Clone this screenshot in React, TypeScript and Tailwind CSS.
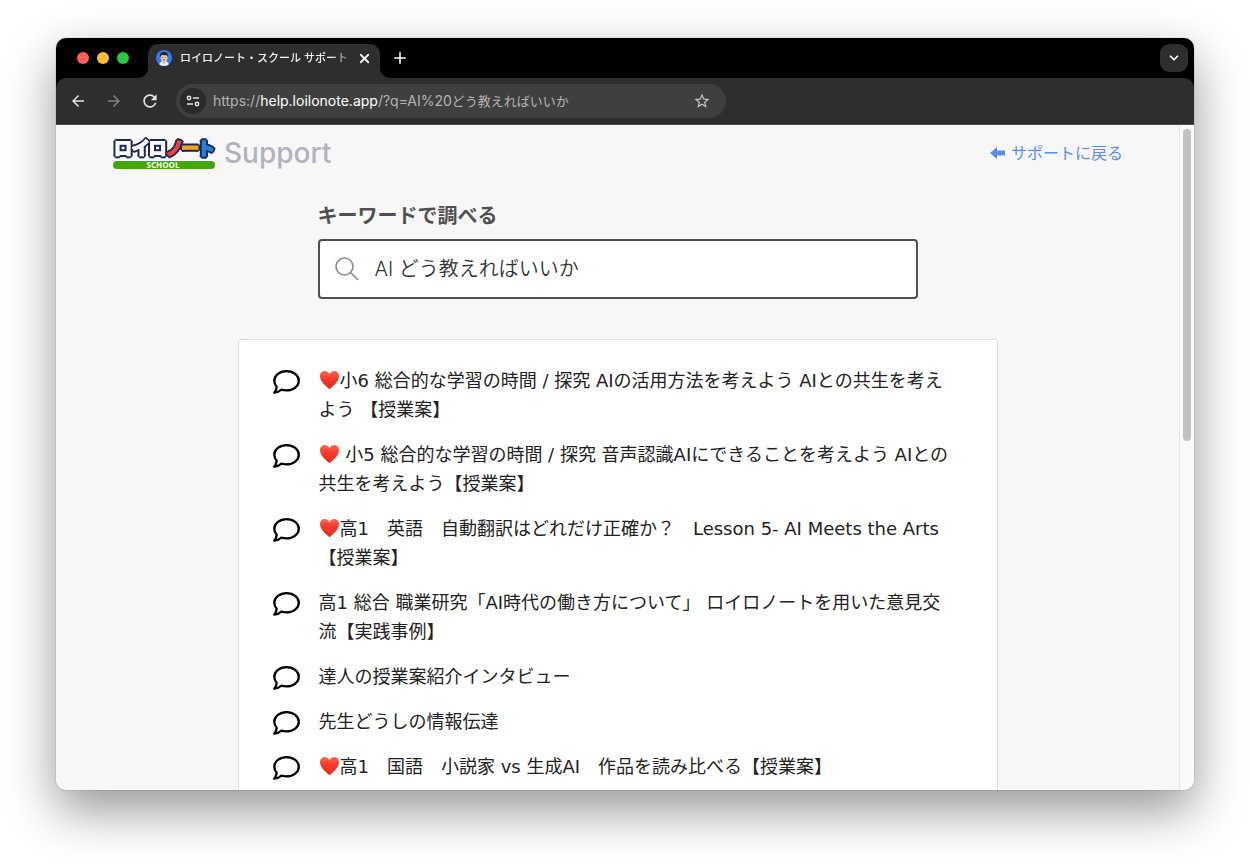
import { LuChevronDown, LuPlus, LuX } from "react-icons/lu"
import { MdArrowBack, MdArrowForward, MdRefresh, MdStarBorder } from "react-icons/md"

const results = [
  "❤️小6 総合的な学習の時間 / 探究 AIの活用方法を考えよう AIとの共生を考えよう 【授業案】",
  "❤️ 小5 総合的な学習の時間 / 探究 音声認識AIにできることを考えよう AIとの共生を考えよう【授業案】",
  "❤️高1　英語　自動翻訳はどれだけ正確か？　Lesson 5- AI Meets the Arts【授業案】",
  "高1 総合 職業研究「AI時代の働き方について」 ロイロノートを用いた意見交流【実践事例】",
  "達人の授業案紹介インタビュー",
  "先生どうしの情報伝達",
  "❤️高1　国語　小説家 vs 生成AI　作品を読み比べる【授業案】",
]

function Heart() {
  return (
    <svg className="inline-block align-[-3px]" width="21" height="20" viewBox="0 0 21 20" aria-hidden="true">
      <defs>
        <linearGradient id="heart" x1="0" y1="0" x2="0" y2="1">
          <stop offset="0" stopColor="#ff6a55" />
          <stop offset="0.4" stopColor="#f93a2e" />
          <stop offset="1" stopColor="#e02a1c" />
        </linearGradient>
      </defs>
      <path
        d="M10.5 4.2C9.4 1.9 7.6 1 5.7 1C2.9 1 1 3.2 1 6.1C1 11.3 6 15.6 10.5 19.3C15 15.6 20 11.3 20 6.1C20 3.2 18.1 1 15.3 1C13.4 1 11.6 1.9 10.5 4.2Z"
        fill="url(#heart)"
      />
    </svg>
  )
}

function Bubble() {
  return (
    <svg className="mt-[3px] shrink-0" width="28" height="25" viewBox="0 0 28 25" fill="none" aria-hidden="true">
      <path
        d="M14.6 2.1C7.8 2.1 2.3 6.3 2.3 11.7C2.3 14.2 3.3 16.2 4.7 17.8C4.5 20 3.6 22 2.2 23.7C5 23.4 7.3 22.6 9.2 20.7C10.9 21.2 12.7 21.4 14.6 21.4C21.4 21.4 26.8 17.1 26.8 11.7C26.8 6.3 21.4 2.1 14.6 2.1Z"
        stroke="#000"
        strokeWidth="2.3"
        strokeLinejoin="round"
      />
    </svg>
  )
}

function Logo() {
  return (
    <svg className="overflow-visible" width="104" height="34" viewBox="0 0 104 34" role="img" aria-label="ロイロノート SCHOOL">
      <g className="[filter:drop-shadow(1px_1px_0_#1c2850)_drop-shadow(-1px_-1px_0_#1c2850)_drop-shadow(1px_-1px_0_#1c2850)_drop-shadow(-1px_1px_0_#1c2850)]">
        <text
          x="2"
          y="19"
          fontSize="18"
          fill="#fff"
          stroke="#fff"
          strokeWidth="1.6"
          className="font-['Noto_Sans_CJK_JP',sans-serif] font-bold [font-feature-settings:'palt']"
        >
          ロイロ<tspan fill="#ee4438" stroke="#ee4438">ノ</tspan><tspan fill="#f5a31a" stroke="#f5a31a">ー</tspan><tspan fill="#2583dc" stroke="#2583dc">ト</tspan>
        </text>
      </g>
      <rect x="1" y="25" width="102" height="8" rx="4" fill="#40a808" />
      <text x="51" y="32" textAnchor="middle" fontSize="8" fill="#fff" className="font-['Open_Sans',sans-serif] font-bold">SCHOOL</text>
    </svg>
  )
}

function Avatar() {
  return (
    <svg className="shrink-0" width="16" height="16" viewBox="0 0 16 16" aria-hidden="true">
      <clipPath id="face"><circle cx="8" cy="8" r="8" /></clipPath>
      <g clipPath="url(#face)">
        <rect width="16" height="16" fill="#2c7ff0" />
        <path d="M3 16C3 12.5 5 11 8 11S13 12.5 13 16Z" fill="#e8eef8" />
        <path d="M7 10H9V13L8 14L7 13Z" fill="#e0a98a" />
        <ellipse cx="8" cy="7.5" rx="3.5" ry="4" fill="#f2c3a4" />
        <path d="M4 7.5C3.3 4 5 2 8 2S12.7 4 12 7.5L11 5.3C9 5.3 7 5 6 4.7L5 6Z" fill="#2b2328" />
        <path d="M6 7.5H7M9 7.5H10M7 9.7H9" stroke="#5b3329" strokeWidth="0.8" />
      </g>
    </svg>
  )
}

function TabStrip() {
  return (
    <div className="flex h-10 items-end bg-black pr-1.5 pl-[21px]">
      <div className="flex h-10 items-center gap-2">
        <button aria-label="Close window" className="size-3 rounded-full bg-[#ff5f57]" />
        <button aria-label="Minimize window" className="size-3 rounded-full bg-[#febc2e]" />
        <button aria-label="Zoom window" className="size-3 rounded-full bg-[#28c840]" />
      </div>
      <div className="ml-2 size-[11px] bg-[#2e2e2e]">
        <div className="size-full rounded-br-[10px] bg-black" />
      </div>
      <div className="flex h-[34px] w-[232px] items-center rounded-t-[10px] bg-[#2e2e2e] pr-2 pb-1.5 pl-2">
        <Avatar />
        <span className="ml-2 flex-1 mask-r-from-85% text-[11px] font-medium whitespace-nowrap text-[#f0f0f0]">
          ロイロノート・スクール サポート
        </span>
        <button aria-label="Close tab" className="text-[#f0f0f0]"><LuX size={15} strokeWidth={3} /></button>
      </div>
      <div className="size-[11px] bg-[#2e2e2e]">
        <div className="size-full rounded-bl-[10px] bg-black" />
      </div>
      <div className="flex h-10 flex-1 items-center justify-between">
        <button aria-label="New tab" className="text-white"><LuPlus size={18} /></button>
        <button aria-label="Search tabs" className="flex size-7 items-center justify-center rounded-[9px] bg-[#2e2e2e] text-white">
          <LuChevronDown size={14} strokeWidth={3} />
        </button>
      </div>
    </div>
  )
}

function Toolbar() {
  return (
    <div className="bg-black">
      <div className="flex h-[47px] items-center rounded-t-[10px] border-b border-[#4a4a4a] bg-[#2e2e2e] pl-[13px] text-[#e3e3e3]">
        <button aria-label="Back"><MdArrowBack size={18} /></button>
        <button aria-label="Forward" className="ml-[18px] text-[#808080]"><MdArrowForward size={18} /></button>
        <button aria-label="Reload" className="ml-[17px]"><MdRefresh size={20} /></button>
        <div className="ml-4 flex h-[34px] w-[550px] items-center rounded-full bg-[#3f3f3f] pr-[15px] pl-1">
          <button aria-label="Site information" className="flex size-[26px] items-center justify-center rounded-full bg-[#2a2a2a]">
            <svg width="14" height="12" viewBox="0 0 14 12" fill="none" stroke="currentColor" strokeWidth="1.5">
              <circle cx="3" cy="3" r="1.7" />
              <path d="M7 3H13M1 9H7" />
              <circle cx="11" cy="9" r="1.7" />
            </svg>
          </button>
          <div className="ml-[7px] flex-1 text-sm whitespace-nowrap text-[#b4b4b4]">
            https://<span className="text-white">help.loilonote.app</span>/?q=AI%20<span className="text-[13px]">どう教えればいいか</span>
          </div>
          <button aria-label="Bookmark" className="text-[#c8c8c8]"><MdStarBorder size={18} /></button>
        </div>
      </div>
    </div>
  )
}

function Page() {
  return (
    <div className="min-w-0 flex-1 overflow-hidden bg-[#f7f7f7]">
      <header className="flex h-14 items-center justify-between px-14">
        <a href="#" className="flex items-center gap-2">
          <Logo />
          <span className="text-[28px] leading-8 font-medium text-[#b1b3ba]">Support</span>
        </a>
        <a href="#" className="flex items-center gap-1.5 text-base text-[#5b8def]">
          <svg width="15" height="12" viewBox="0 0 15 12" fill="currentColor" aria-hidden="true">
            <path d="M0 6L7 0V3.5H15V8.5H7V12Z" />
          </svg>
          サポートに戻る
        </a>
      </header>
      <main>
        <form className="mx-auto mt-5 max-w-[600px]">
          <label htmlFor="keyword" className="block text-xl leading-[30px] font-bold text-[#505050]">キーワードで調べる</label>
          <div className="mt-2 flex h-[60px] items-center rounded border-2 border-[#505050] bg-white px-[15px]">
            <svg className="shrink-0" width="24" height="24" viewBox="0 0 24 24" fill="none" stroke="#8a8a8a" strokeWidth="1.6" aria-hidden="true">
              <circle cx="9.5" cy="9.5" r="8.5" />
              <path d="M15.5 15.5L23 23" />
            </svg>
            <input id="keyword" defaultValue="AI どう教えればいいか" className="ml-4 min-w-0 flex-1 text-xl font-[350] text-[#333] outline-none" />
          </div>
        </form>
        <ul className="mx-auto mt-10 flex max-w-[760px] flex-col gap-4 rounded-[3px] border border-[#ddd] bg-white pt-[26px] pr-[43px] pb-8 pl-[33px] font-['DejaVu_Sans','Noto_Sans_CJK_JP',sans-serif]">
          {results.map((title) => (
            <li key={title}>
              <a href="#" className="flex text-lg leading-[29px] text-[#222]">
                <Bubble />
                <span className="ml-[19px]">
                  {title.startsWith("❤️") && <Heart />}
                  {title.replace("❤️", "")}
                </span>
              </a>
            </li>
          ))}
        </ul>
      </main>
    </div>
  )
}

export default function App() {
  return (
    <div className="flex h-screen flex-col bg-white px-14 pt-[38px] pb-[74px] font-['Inter','Noto_Sans_CJK_JP',sans-serif]">
      <div className="flex min-h-0 flex-1 flex-col overflow-hidden rounded-[10px] shadow-[0_0_1px_rgba(0,0,0,0.6),0_20px_50px_rgba(0,0,0,0.42)]">
        <TabStrip />
        <Toolbar />
        <div className="flex min-h-0 flex-1">
          <Page />
          <div className="w-[15px] border-l border-[#e6e6e6] bg-[#fafafa] pt-1 pl-[3px]">
            <div className="h-[312px] w-2 rounded-full bg-[#c1c1c1]" />
          </div>
        </div>
      </div>
    </div>
  )
}
